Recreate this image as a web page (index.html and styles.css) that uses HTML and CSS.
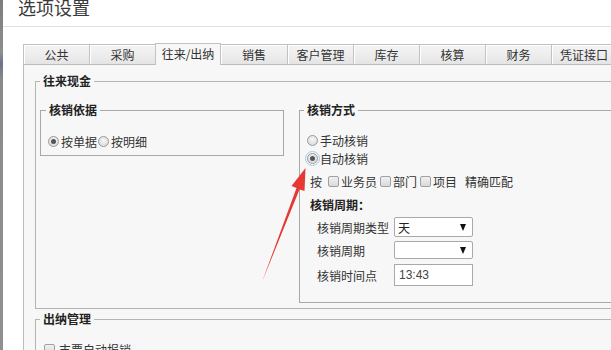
FILE: index.html
```html
<!DOCTYPE html>
<html lang="zh-CN">
<head>
<meta charset="utf-8">
<title>选项设置</title>
<link rel="stylesheet" href="styles.css">
</head>
<body>
<div class="app">
  <div class="strip"></div>
  <div class="dialog">
    <div class="title">选项设置</div>
    <div class="tabs">
      <div class="tab">公共</div>
      <div class="tab">采购</div>
      <div class="tab active">往来/出纳</div>
      <div class="tab">销售</div>
      <div class="tab">客户管理</div>
      <div class="tab">库存</div>
      <div class="tab">核算</div>
      <div class="tab">财务</div>
      <div class="tab">凭证接口</div>
    </div>
    <div class="panel">
      <fieldset class="fs outer">
        <legend>往来现金</legend>
        <div class="outer-body">
          <fieldset class="fs basis">
            <legend>核销依据</legend>
            <div class="basis-body">
              <span class="radio checked"></span><span class="rlabel">按单据</span>
              <span class="radio second"></span><span class="rlabel">按明细</span>
            </div>
          </fieldset>
          <fieldset class="fs method">
            <legend>核销方式</legend>
            <div class="method-body">
              <div class="row"><span class="radio"></span><span class="rlabel">手动核销</span></div>
              <div class="row"><span class="radio checked focus"></span><span class="rlabel">自动核销</span></div>
              <div class="row match">
                <span>按</span>
                <span class="check first"></span><span class="clabel">业务员</span>
                <span class="check"></span><span class="clabel">部门</span>
                <span class="check"></span><span class="clabel">项目</span>
                <span class="exact">精确匹配</span>
              </div>
              <div class="row period-title">核销周期：</div>
              <div class="frow r1"><span class="flabel">核销周期类型</span><span class="select h20"><span>天</span><i class="caret"></i></span></div>
              <div class="frow r2"><span class="flabel">核销周期</span><span class="select h18"><span></span><i class="caret"></i></span></div>
              <div class="frow r3"><span class="flabel">核销时间点</span><span class="input">13:43</span></div>
            </div>
          </fieldset>
        </div>
      </fieldset>
      <fieldset class="fs outer cash">
        <legend>出纳管理</legend>
        <div class="cash-body">
          <span class="check"></span><span class="cash-label">支票自动报销</span>
        </div>
      </fieldset>
    </div>
  </div>
</div>
<svg class="arrow" width="611" height="350" viewBox="0 0 611 350">
  <polygon points="262,282 296.5,188 291.5,186 305.5,168 304.5,191 299.5,189.5" fill="#e53935"/>
</svg>
</body>
</html>
```
FILE: styles.css
```css
html, body {
  margin: 0;
  padding: 0;
  width: 611px;
  height: 350px;
  overflow: hidden;
  background: #fff;
}
body {
  font-family: "Noto Sans CJK SC", "Microsoft YaHei", sans-serif;
  font-size: 12px;
  color: #333;
  position: relative;
}
.app {
  display: flex;
  height: 350px;
}
.strip {
  width: 3px;
  flex: none;
  background: linear-gradient(#7d7d7d, #8e8e8e 15%, #6a7488 18%, #8a8a8a 23%, #909090);
}
.dialog {
  flex: 1;
  min-width: 0;
  display: flex;
  flex-direction: column;
  overflow: hidden;
}
.title {
  height: 26px;
  flex: none;
  border-bottom: 1px solid #e0e0e0;
  font-size: 18px;
  line-height: 15px;
  padding-left: 15px;
  color: #3a3a3a;
}
.tabs {
  display: flex;
  flex: none;
  margin-top: 17px;
  padding-left: 20px;
  height: 20px;
  align-items: flex-end;
}
.tab {
  width: 66px;
  height: 20px;
  flex: none;
  box-sizing: border-box;
  border-left: 1px solid #c2c2c2;
  border-top: 1px solid #c2c2c2;
  background: linear-gradient(#f4f4f4, #ececec 60%, #e4e4e4);
  box-shadow: inset 1px 1px 0 #fff;
  text-align: center;
  line-height: 19px;
  color: #333;
}
.tab.active {
  height: 22px;
  margin-bottom: -1px;
  border-right: 1px solid #c2c2c2;
  background: #f7f7f7;
  box-shadow: none;
  line-height: 20px;
  position: relative;
  z-index: 1;
}
.tab.active + .tab {
  border-left: none;
}
.tab:last-child {
  border-right: 1px solid #c2c2c2;
}
.panel {
  flex: 1;
  margin-left: 20px;
  border-left: 1px solid #bcbcbc;
  border-top: 1px solid #bcbcbc;
  background: #f7f7f7;
  padding-left: 11px;
}
.fs {
  margin: 0;
  padding: 0;
  border: 1px solid #b4b4b4;
  min-width: 0;
  box-sizing: border-box;
}
.fs legend {
  padding: 0 3px;
  margin-left: 4px;
  line-height: 16px;
  font-weight: bold;
  color: #222;
}
.outer {
  margin-top: 8px;
  border-right: none;
}
.outer-body {
  display: flex;
  align-items: flex-start;
  gap: 15px;
  padding: 13px 0 5px 4px;
}
.basis {
  width: 244px;
  flex: none;
  border-color: #a8a8a8;
}
.basis legend {
  margin-left: 5px;
}
.basis-body {
  display: flex;
  align-items: center;
  height: 16px;
  padding: 15px 0 6px 7px;
}
.method {
  flex: 1;
  border-right: none;
  border-color: #a8a8a8;
}
.method-body {
  padding: 13px 0 16px 7px;
}
.row {
  display: flex;
  align-items: center;
  height: 18px;
}
.radio {
  width: 11px;
  height: 11px;
  box-sizing: border-box;
  border-radius: 50%;
  border: 1px solid #999;
  background: radial-gradient(circle at 50% 40%, #f6f6f6, #d6d6d6);
  flex: none;
  position: relative;
}
.radio.checked::after {
  content: "";
  position: absolute;
  left: 2px;
  top: 2px;
  width: 5px;
  height: 5px;
  border-radius: 50%;
  background: #555;
}
.radio.second {
  margin-left: 1px;
}
.radio.focus {
  outline: 1px solid #a9c8e6;
  outline-offset: 1px;
}
.rlabel {
  margin-left: 2px;
  color: #333;
}
.match {
  margin-top: 5px;
  padding-left: 3px;
}
.check {
  width: 11px;
  height: 11px;
  box-sizing: border-box;
  border: 1px solid #a0a0a0;
  border-radius: 2px;
  background: linear-gradient(#f0f0f0, #dadada);
  flex: none;
  margin-left: 3px;
}
.check.first {
  margin-left: 6px;
}
.clabel {
  margin-left: 2px;
}
.exact {
  margin-left: 8px;
}
.period-title {
  margin-top: 5px;
  padding-left: 3px;
  font-weight: bold;
  color: #222;
}
.frow {
  display: flex;
  align-items: center;
  padding-left: 10px;
}
.frow.r1 { margin-top: 4px; }
.frow.r2 { margin-top: 4px; }
.frow.r3 { margin-top: 5px; }
.flabel {
  width: 77px;
  flex: none;
}
.select {
  width: 79px;
  box-sizing: border-box;
  border: 1px solid #a9a9a9;
  border-radius: 2px;
  background: #fff;
  display: flex;
  align-items: center;
  justify-content: space-between;
  padding: 0 6px 0 3px;
  color: #222;
}
.select.h20 { height: 20px; }
.select.h18 { height: 18px; }
.caret {
  width: 0;
  height: 0;
  border-left: 3.5px solid transparent;
  border-right: 3.5px solid transparent;
  border-top: 7px solid #111;
}
.input {
  width: 79px;
  height: 22px;
  box-sizing: border-box;
  border: 1px solid #a9a9a9;
  background: #fff;
  padding-left: 4px;
  line-height: 20px;
  font-family: "Liberation Sans", Arial, sans-serif;
  font-size: 12px;
  color: #444;
}
.cash {
  margin-top: 2px;
}
.cash-body {
  display: flex;
  align-items: center;
  height: 16px;
  padding: 14px 0 10px 8px;
}
.cash-body .check {
  margin-left: 0;
}
.cash-label {
  margin-left: 4px;
}
.arrow {
  position: absolute;
  left: 0;
  top: 0;
  pointer-events: none;
}
```
